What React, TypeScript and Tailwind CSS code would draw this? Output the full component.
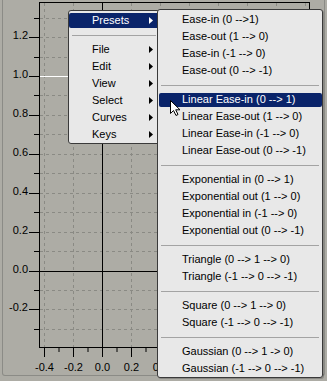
import React from 'react';

const font = { fontFamily: '"Liberation Sans", Arial, sans-serif' };

const mainItems = ['File', 'Edit', 'View', 'Select', 'Curves', 'Keys'];

const presetGroups = [
  ['Ease-in (0 -->1)', 'Ease-out (1 --> 0)', 'Ease-in (-1 --> 0)', 'Ease-out (0 --> -1)'],
  ['Linear Ease-in (0 --> 1)', 'Linear Ease-out (1 --> 0)', 'Linear Ease-in (-1 --> 0)', 'Linear Ease-out (0 --> -1)'],
  ['Exponential in (0 --> 1)', 'Exponential out (1 --> 0)', 'Exponential in (-1 --> 0)', 'Exponential out (0 --> -1)'],
  ['Triangle (0 --> 1 --> 0)', 'Triangle (-1 --> 0 --> -1)'],
  ['Square (0 --> 1 --> 0)', 'Square (-1 --> 0 --> -1)'],
  ['Gaussian (0 --> 1 -> 0)', 'Gaussian (-1 --> 0 --> -1)'],
];

const yAt = (k: number) => Math.floor(271 - 19.45 * k) + 0.5;
const xAt = (j: number) => 44.5 + 29 * j;

const Arrow = ({ white }: { white?: boolean }) => (
  <svg width="4" height="7" viewBox="0 0 4 7" className="shrink-0">
    <path d="M0 0 L4 3.5 L0 7 Z" fill={white ? '#ffffff' : '#000000'} />
  </svg>
);

const Separator = () => (
  <div className="flex h-[12px] items-center px-[3px]">
    <div className="h-px w-full bg-[#a3a3a3]" />
  </div>
);

const Chart = () => {
  const ks = Array.from({ length: 17 }, (_, i) => i - 3);
  const js = Array.from({ length: 10 }, (_, i) => i);
  return (
    <svg width="321" height="376" viewBox="3 0 321 376" className="block" style={font}>
      {js.map((j) =>
        j === 2 ? null : (
          <line key={'v' + j} x1={xAt(j)} y1={3} x2={xAt(j)} y2={347} stroke="#8a8a84" strokeDasharray="3 3" />
        ),
      )}
      {ks.map((k) =>
        k === 0 ? null : (
          <line key={'h' + k} x1={40} y1={yAt(k)} x2={309} y2={yAt(k)} stroke="#8a8a84" strokeDasharray="3 3" />
        ),
      )}
      <line x1={39.5} y1={2.5} x2={309.5} y2={2.5} stroke="#000" />
      <line x1={39.5} y1={2} x2={39.5} y2={348} stroke="#000" />
      <line x1={309.5} y1={2} x2={309.5} y2={348} stroke="#000" />
      <line x1={39.5} y1={347.5} x2={309.5} y2={347.5} stroke="#000" />
      <line x1={102.5} y1={2} x2={102.5} y2={347} stroke="#000" />
      <line x1={40} y1={yAt(0)} x2={309} y2={yAt(0)} stroke="#000" />
      <line x1={40} y1={yAt(10)} x2={68} y2={yAt(10)} stroke="#fff" />
      {ks.map((k) => (
        <line
          key={'lt' + k}
          x1={k % 2 === 0 ? 29 : 34}
          y1={yAt(k)}
          x2={39}
          y2={yAt(k)}
          stroke="#000"
        />
      ))}
      {ks
        .filter((k) => k % 2 === 0 && k >= -2 && k <= 12)
        .map((k) => (
          <text key={'ll' + k} x={28} y={yAt(k) + 1} textAnchor="end" fontSize="11" fill="#000">
            {(k / 10).toFixed(1)}
          </text>
        ))}
      {js.map((j) => (
        <g key={'bt' + j}>
          <line x1={xAt(j)} y1={348} x2={xAt(j)} y2={357} stroke="#000" />
          <line x1={xAt(j) + 14.5} y1={348} x2={xAt(j) + 14.5} y2={352} stroke="#000" />
        </g>
      ))}
      {/* only the labels left of the submenu are visible */}
      {js.slice(0, 5).map((j) => (
        <text key={'bl' + j} x={xAt(j)} y={370.5} textAnchor="middle" fontSize="11" fill="#000">
          {(-0.4 + 0.2 * j).toFixed(1).replace('-0.0', '0.0')}
        </text>
      ))}
    </svg>
  );
};

export default function App() {
  return (
    <div className="relative h-[381px] w-[327px] overflow-hidden bg-[#adaca5] px-[2px]" style={font}>
      <div className="h-[376px] rounded-b-[3px] border-x border-b border-[#8b8b86]">
        <Chart />
      </div>

      {/* main context menu */}
      <div className="absolute left-[68px] top-[10px] w-[92px] rounded-[3px] border border-[#3a3a3a] bg-[#e8e8e8] pt-px text-[11px] text-black">
        <div className="flex h-[17px] items-center">
          <div className="flex h-[15px] w-full items-center justify-between rounded-[2px] bg-[#0a246a] pl-[23px] pr-[6px] text-white">
            <span>Presets</span>
            <Arrow white />
          </div>
        </div>
        <Separator />
        {mainItems.map((item) => (
          <div key={item} className="flex h-[17px] items-center justify-between pl-[23px] pr-[6px]">
            <span>{item}</span>
            <Arrow />
          </div>
        ))}
      </div>

      {/* presets submenu */}
      <div className="absolute left-[157px] top-[9px] w-[166px] rounded-[3px] border border-[#3a3a3a] bg-[#e8e8e8] pt-px text-[11px] text-black shadow-[1px_1px_0_rgba(0,0,0,0.2)]">
        {presetGroups.map((group, gi) => (
          <div key={gi}>
            {gi > 0 && <Separator />}
            {group.map((item) =>
              item === 'Linear Ease-in (0 --> 1)' ? (
                <div key={item} className="flex h-[17px] items-center pl-px">
                  <div className="flex h-[14px] w-full items-center rounded-[2px] bg-[#0a246a] pl-[23px] text-white">
                    {item}
                  </div>
                </div>
              ) : (
                <div key={item} className="flex h-[17px] items-center whitespace-nowrap pl-[24px]">
                  {item}
                </div>
              ),
            )}
          </div>
        ))}
      </div>

      {/* mouse pointer */}
      <svg width="12" height="17" viewBox="0 0 12 17" className="absolute left-[170px] top-[100px]">
        <path d="M0.5 0.5 L0.5 13.5 L3.5 10.5 L6 15.5 L8 14.5 L5.7 9.8 L10 9.8 Z" fill="#fff" stroke="#000" strokeLinejoin="round" />
      </svg>
    </div>
  );
}
